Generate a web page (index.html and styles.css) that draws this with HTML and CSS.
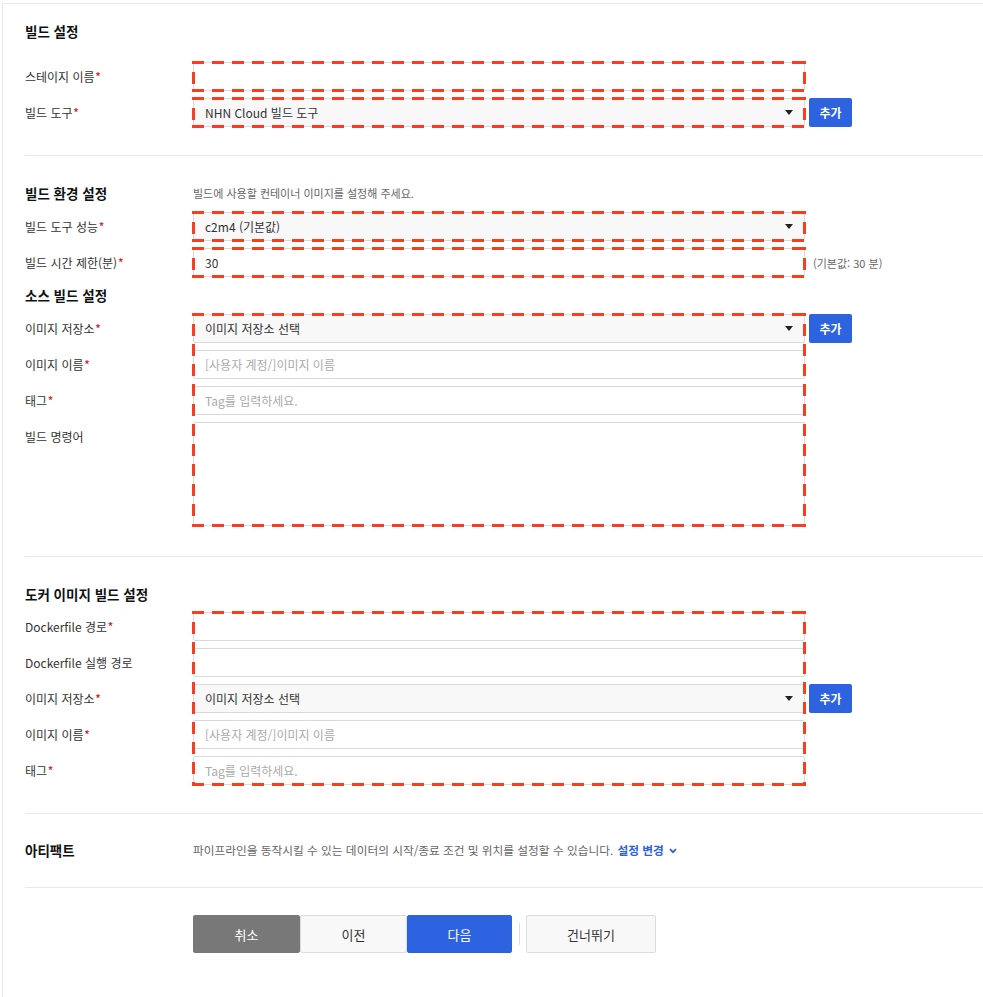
FILE: index.html
```html
<!DOCTYPE html>
<html lang="ko">
<head>
<meta charset="utf-8">
<title>빌드 설정</title>
<link rel="stylesheet" href="styles.css">
</head>
<body>
<div class="page">
  <section class="sec sec-1">
    <h3 class="sec-title">빌드 설정</h3>
    <div class="rows">
      <div class="row dashed">
        <label class="lbl">스테이지 이름<span class="req">*</span></label>
        <input class="ctl" type="text">
      </div>
      <div class="row dashed">
        <label class="lbl">빌드 도구<span class="req">*</span></label>
        <div class="ctl select"><span>NHN Cloud 빌드 도구</span><i class="caret"></i></div>
        <button class="btn-add">추가</button>
      </div>
    </div>
  </section>

  <section class="sec sec-2">
    <div class="title-row">
      <h3 class="sec-title">빌드 환경 설정</h3>
      <p class="desc">빌드에 사용할 컨테이너 이미지를 설정해 주세요.</p>
    </div>
    <div class="rows">
      <div class="row dashed">
        <label class="lbl">빌드 도구 성능<span class="req">*</span></label>
        <div class="ctl select"><span>c2m4 (기본값)</span><i class="caret"></i></div>
      </div>
      <div class="row dashed">
        <label class="lbl">빌드 시간 제한(분)<span class="req">*</span></label>
        <input class="ctl" type="text" value="30">
        <span class="hint">(기본값: 30 분)</span>
      </div>
    </div>

    <h3 class="sec-title sub-title">소스 빌드 설정</h3>
    <div class="rows dashed">
      <div class="row">
        <label class="lbl">이미지 저장소<span class="req">*</span></label>
        <div class="ctl select"><span>이미지 저장소 선택</span><i class="caret"></i></div>
        <button class="btn-add">추가</button>
      </div>
      <div class="row">
        <label class="lbl">이미지 이름<span class="req">*</span></label>
        <input class="ctl" type="text" placeholder="[사용자 계정/]이미지 이름">
      </div>
      <div class="row">
        <label class="lbl">태그<span class="req">*</span></label>
        <input class="ctl" type="text" placeholder="Tag를 입력하세요.">
      </div>
      <div class="row row-area">
        <label class="lbl">빌드 명령어</label>
        <textarea class="ctl area"></textarea>
      </div>
    </div>
  </section>

  <section class="sec sec-3">
    <h3 class="sec-title">도커 이미지 빌드 설정</h3>
    <div class="rows dashed">
      <div class="row">
        <label class="lbl">Dockerfile 경로<span class="req">*</span></label>
        <input class="ctl" type="text">
      </div>
      <div class="row">
        <label class="lbl">Dockerfile 실행 경로</label>
        <input class="ctl" type="text">
      </div>
      <div class="row">
        <label class="lbl">이미지 저장소<span class="req">*</span></label>
        <div class="ctl select"><span>이미지 저장소 선택</span><i class="caret"></i></div>
        <button class="btn-add">추가</button>
      </div>
      <div class="row">
        <label class="lbl">이미지 이름<span class="req">*</span></label>
        <input class="ctl" type="text" placeholder="[사용자 계정/]이미지 이름">
      </div>
      <div class="row">
        <label class="lbl">태그<span class="req">*</span></label>
        <input class="ctl" type="text" placeholder="Tag를 입력하세요.">
      </div>
    </div>
  </section>

  <section class="sec sec-4">
    <div class="title-row">
      <h3 class="sec-title">아티팩트</h3>
      <p class="desc desc-art">파이프라인을 동작시킬 수 있는 데이터의 시작/종료 조건 및 위치를 설정할 수 있습니다. <a class="link">설정 변경<svg class="chev" width="8" height="6" viewBox="0 0 8 6"><polyline points="1,1.2 4,4.2 7,1.2" fill="none" stroke="#2d62e0" stroke-width="1.8"/></svg></a></p>
    </div>
  </section>

  <div class="actions">
    <button class="btn btn-cancel">취소</button>
    <button class="btn btn-light">이전</button>
    <button class="btn btn-primary">다음</button>
    <span class="vsep"></span>
    <button class="btn btn-light btn-skip">건너뛰기</button>
  </div>
</div>
</body>
</html>
```

FILE: styles.css
```css
html, body {
  margin: 0;
  padding: 0;
  background: #fff;
}

body {
  font-family: "Noto Sans CJK KR", "Noto Sans", sans-serif;
  font-size: 12px;
  color: #333;
}

.page {
  margin: 3px 0 0 2px;
  border-top: 1px solid #e9e9e9;
  border-left: 1px solid #e9e9e9;
  height: 994px;
  box-sizing: border-box;
  overflow: hidden;
}

.sec {
  margin-left: 22px;
  border-bottom: 1px solid #e9e9e9;
}

.sec-1 { padding: 17px 0 28px; }
.sec-2 { padding: 27px 0 30px; }
.sec-3 { padding: 27px 0 28px; }
.sec-4 { padding: 26px 0 27px; }

.sec-title {
  margin: 0;
  font-size: 13.5px;
  font-weight: 700;
  line-height: 20px;
  color: #111;
}

.sec-1 > .sec-title { margin-bottom: 21px; }
.sec-3 > .sec-title { margin-bottom: 8px; }

.title-row {
  display: grid;
  grid-template-columns: 168px 1fr;
  align-items: center;
}

.sec-2 > .title-row { margin-bottom: 9px; }

.sub-title {
  margin: 8px 0 9px;
}

.desc {
  margin: 0;
  font-size: 11px;
  line-height: 20px;
  color: #666;
}

.desc-art {
  font-size: 11.7px;
}

.link {
  color: #2d62e0;
  font-weight: 700;
  margin-left: 1px;
}

.chev {
  margin-left: 5px;
  vertical-align: 1px;
}

.rows {
  display: flex;
  flex-direction: column;
  gap: 7px;
}

.row {
  display: flex;
  align-items: center;
  height: 29px;
}

.row-area {
  height: 104px;
  align-items: flex-start;
}

.lbl {
  flex: 0 0 168px;
  font-size: 12px;
  line-height: 16px;
  color: #333;
}

.row-area .lbl {
  margin-top: 7px;
}

.req {
  color: #e0262b;
  font-weight: 700;
  font-size: 10px;
  vertical-align: 2px;
  margin-left: 1px;
}

.ctl {
  box-sizing: border-box;
  flex: 0 0 612px;
  width: 612px;
  height: 29px;
  margin: 0;
  border: 1px solid #d9d9d9;
  border-radius: 2px;
  background: #fff;
  padding: 0 11px;
  font-family: inherit;
  font-size: 12px;
  color: #333;
  outline: none;
}

.ctl::placeholder {
  color: #aaa;
}

.select {
  display: flex;
  align-items: center;
  justify-content: space-between;
  background: #f8f8f8;
  padding-right: 11px;
}

.caret {
  width: 0;
  height: 0;
  border-left: 4px solid transparent;
  border-right: 4px solid transparent;
  border-top: 5px solid #222;
}

.area {
  height: 104px;
  resize: none;
  padding: 8px 11px;
}

.btn-add {
  margin-left: 4px;
  width: 43px;
  height: 29px;
  border: 0;
  border-radius: 2px;
  background: #2d62e0;
  color: #fff;
  font-family: inherit;
  font-size: 12px;
  font-weight: 700;
  padding: 0;
}

.hint {
  margin-left: 8px;
  font-size: 11px;
  color: #666;
}

.dashed {
  position: relative;
}

.dashed::after {
  content: "";
  position: absolute;
  top: -1px;
  bottom: -1px;
  left: 167px;
  width: 614px;
  z-index: 1;
  pointer-events: none;
  --r: #fb3b22;
  background:
    repeating-linear-gradient(90deg, var(--r) 0 12px, transparent 12px 20px) left top / 100% 3px no-repeat,
    repeating-linear-gradient(90deg, var(--r) 0 12px, transparent 12px 20px) left bottom / 100% 3px no-repeat,
    repeating-linear-gradient(180deg, var(--r) 0 3px, transparent 3px 11px, var(--r) 11px 20px) left top / 3px 100% no-repeat,
    repeating-linear-gradient(180deg, var(--r) 0 3px, transparent 3px 11px, var(--r) 11px 20px) right top / 3px 100% no-repeat;
}

.actions {
  display: flex;
  align-items: center;
  margin: 27px 0 0 190px;
}

.btn {
  box-sizing: border-box;
  height: 38px;
  width: 107px;
  border: 1px solid #dcdcdc;
  border-radius: 2px;
  font-family: inherit;
  font-size: 13px;
  padding: 0;
  color: #333;
  background: #f8f8f8;
}

.btn-cancel {
  background: #787878;
  border-color: #787878;
  color: #fff;
}

.btn-primary {
  background: #2d62e0;
  border-color: #2d62e0;
  color: #fff;
  width: 105px;
}

.vsep {
  width: 1px;
  height: 22px;
  background: #ddd;
  margin: 0 6px 0 7px;
}

.btn-skip {
  width: 130px;
}
```
